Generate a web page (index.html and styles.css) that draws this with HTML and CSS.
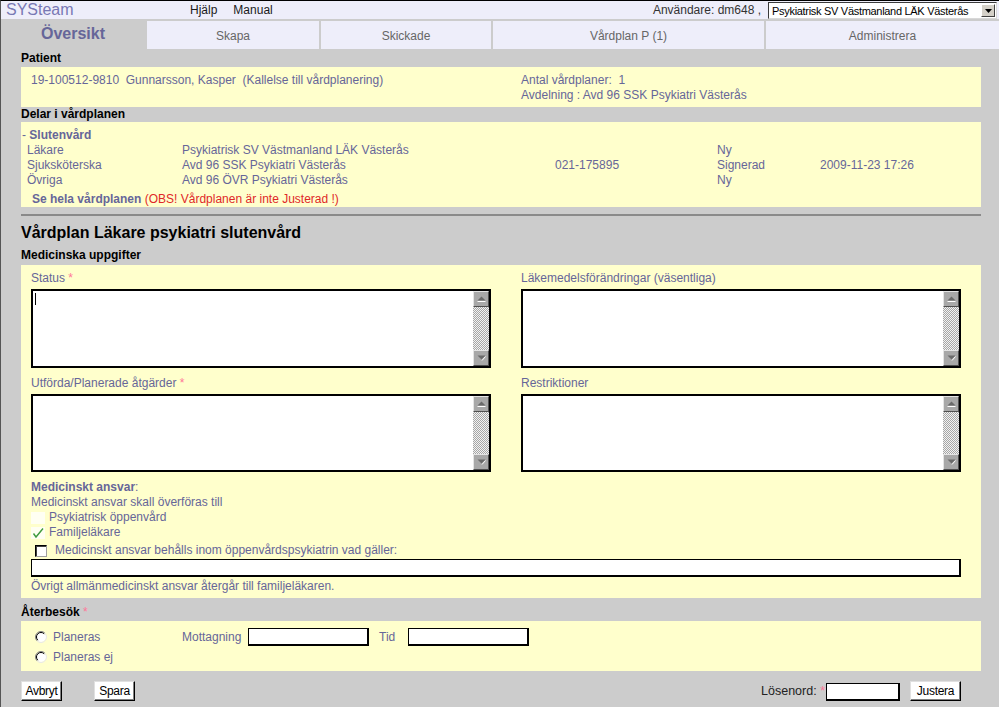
FILE: index.html
```html
<!DOCTYPE html>
<html lang="sv">
<head>
<meta charset="utf-8">
<title>SYSteam – Vårdplan</title>
<link rel="stylesheet" href="styles.css">
</head>
<body>
<div class="page">
  <header class="topbar">
    <div class="logo">SYSteam</div>
    <nav class="toplinks"><a href="#">Hjälp</a><a href="#">Manual</a></nav>
    <div class="user">
      <span class="user-label">Användare: dm648 ,</span>
      <div class="select">
        <span class="select-text">Psykiatrisk SV Västmanland LÄK Västerås</span>
        <span class="select-btn"><svg width="7" height="4" viewBox="0 0 7 4"><path d="M0 0H7L3.5 4Z" fill="#000"/></svg></span>
      </div>
    </div>
  </header>

  <nav class="tabs">
    <div class="tab active">Översikt</div>
    <div class="tab">Skapa</div>
    <div class="tab">Skickade</div>
    <div class="tab">Vårdplan P (1)</div>
    <div class="tab">Administrera</div>
  </nav>

  <main class="content">
    <h2 class="sec-head sh-patient">Patient</h2>
    <section class="panel patient">
      <div class="pcol">19-100512-9810&nbsp; Gunnarsson, Kasper&nbsp; (Kallelse till vårdplanering)</div>
      <div class="pcol">Antal vårdplaner:&nbsp; 1<br>Avdelning : Avd 96 SSK Psykiatri Västerås</div>
    </section>

    <h2 class="sec-head sh-delar">Delar i vårdplanen</h2>
    <section class="panel delar">
      <div class="grp">- <b>Slutenvård</b></div>
      <div class="drow"><span>Läkare</span><span>Psykiatrisk SV Västmanland LÄK Västerås</span><span></span><span>Ny</span><span></span></div>
      <div class="drow"><span>Sjuksköterska</span><span>Avd 96 SSK Psykiatri Västerås</span><span>021-175895</span><span>Signerad</span><span>2009-11-23 17:26</span></div>
      <div class="drow"><span>Övriga</span><span>Avd 96 ÖVR Psykiatri Västerås</span><span></span><span>Ny</span><span></span></div>
      <div class="see"><b>Se hela vårdplanen</b> <span class="warn">(OBS! Vårdplanen är inte Justerad !)</span></div>
    </section>

    <hr class="sep">
    <h1 class="title">Vårdplan Läkare psykiatri slutenvård</h1>

    <h2 class="sec-head sh-med">Medicinska uppgifter</h2>
    <section class="panel med">
      <div class="fields">
        <div class="field">
          <label class="flabel">Status <span class="req">*</span></label>
          <div class="ta ta-left ta-h1 focused">
            <textarea aria-label="Status"></textarea>
            <div class="sb">
              <div class="sb-btn"><svg width="9" height="6" viewBox="0 0 9 6"><path d="M4.5 0.5L8.5 4.5H0.5Z" fill="#6a6a6a"/><path d="M0.5 5.5H8.5" stroke="#fff" stroke-width="1"/></svg></div>
              <div class="sb-track"></div>
              <div class="sb-btn"><svg width="9" height="6" viewBox="0 0 9 6"><path d="M0.5 0.5H8.5L4.5 4.5Z" fill="#6a6a6a"/><path d="M5 5.5L8.5 1.5" stroke="#fff" stroke-width="1"/></svg></div>
            </div>
          </div>
        </div>
        <div class="field">
          <label class="flabel">Läkemedelsförändringar (väsentliga)</label>
          <div class="ta ta-right ta-h1">
            <textarea aria-label="Läkemedelsförändringar"></textarea>
            <div class="sb">
              <div class="sb-btn"><svg width="9" height="6" viewBox="0 0 9 6"><path d="M4.5 0.5L8.5 4.5H0.5Z" fill="#6a6a6a"/><path d="M0.5 5.5H8.5" stroke="#fff" stroke-width="1"/></svg></div>
              <div class="sb-track"></div>
              <div class="sb-btn"><svg width="9" height="6" viewBox="0 0 9 6"><path d="M0.5 0.5H8.5L4.5 4.5Z" fill="#6a6a6a"/><path d="M5 5.5L8.5 1.5" stroke="#fff" stroke-width="1"/></svg></div>
            </div>
          </div>
        </div>
        <div class="field">
          <label class="flabel">Utförda/Planerade åtgärder <span class="req">*</span></label>
          <div class="ta ta-left ta-h2">
            <textarea aria-label="Utförda/Planerade åtgärder"></textarea>
            <div class="sb">
              <div class="sb-btn"><svg width="9" height="6" viewBox="0 0 9 6"><path d="M4.5 0.5L8.5 4.5H0.5Z" fill="#6a6a6a"/><path d="M0.5 5.5H8.5" stroke="#fff" stroke-width="1"/></svg></div>
              <div class="sb-track"></div>
              <div class="sb-btn"><svg width="9" height="6" viewBox="0 0 9 6"><path d="M0.5 0.5H8.5L4.5 4.5Z" fill="#6a6a6a"/><path d="M5 5.5L8.5 1.5" stroke="#fff" stroke-width="1"/></svg></div>
            </div>
          </div>
        </div>
        <div class="field">
          <label class="flabel">Restriktioner</label>
          <div class="ta ta-right ta-h2">
            <textarea aria-label="Restriktioner"></textarea>
            <div class="sb">
              <div class="sb-btn"><svg width="9" height="6" viewBox="0 0 9 6"><path d="M4.5 0.5L8.5 4.5H0.5Z" fill="#6a6a6a"/><path d="M0.5 5.5H8.5" stroke="#fff" stroke-width="1"/></svg></div>
              <div class="sb-track"></div>
              <div class="sb-btn"><svg width="9" height="6" viewBox="0 0 9 6"><path d="M0.5 0.5H8.5L4.5 4.5Z" fill="#6a6a6a"/><path d="M5 5.5L8.5 1.5" stroke="#fff" stroke-width="1"/></svg></div>
            </div>
          </div>
        </div>
      </div>

      <div class="ansvar">
        <div class="line"><b>Medicinskt ansvar</b>:</div>
        <div class="line">Medicinskt ansvar skall överföras till</div>
        <div class="line opt"><span class="optimg"></span>Psykiatrisk öppenvård</div>
        <div class="line opt"><span class="optimg"><svg width="14" height="12" viewBox="0 0 14 12"><path d="M2.5 6.5L5 10L12 1.5" fill="none" stroke="#3e9a3e" stroke-width="1.4"/></svg></span>Familjeläkare</div>
        <label class="chkrow"><span class="chk"></span>Medicinskt ansvar behålls inom öppenvårdspsykiatrin vad gäller:</label>
        <div class="wideinput"></div>
        <div class="line">Övrigt allmänmedicinskt ansvar återgår till familjeläkaren.</div>
      </div>
    </section>

    <h2 class="sec-head sh-ater">Återbesök <span class="req">*</span></h2>
    <section class="panel ater">
      <div class="arow">
        <span class="radio"><svg width="12" height="12" viewBox="0 0 12 12"><circle cx="6" cy="6" r="5" fill="#fff"/><path d="M9.9 2.1A5.5 5.5 0 0 0 2.1 9.9" fill="none" stroke="#808080" stroke-width="1"/><path d="M9.2 2.8A4.5 4.5 0 0 0 2.8 9.2" fill="none" stroke="#000" stroke-width="1"/><path d="M2.1 9.9A5.5 5.5 0 0 0 9.9 2.1" fill="none" stroke="#e8e8e8" stroke-width="1"/></svg></span>
        <span class="rlabel">Planeras</span>
        <span class="mlabel">Mottagning</span><span class="sinput"></span>
        <span class="tlabel">Tid</span><span class="sinput"></span>
      </div>
      <div class="arow">
        <span class="radio"><svg width="12" height="12" viewBox="0 0 12 12"><circle cx="6" cy="6" r="5" fill="#fff"/><path d="M9.9 2.1A5.5 5.5 0 0 0 2.1 9.9" fill="none" stroke="#808080" stroke-width="1"/><path d="M9.2 2.8A4.5 4.5 0 0 0 2.8 9.2" fill="none" stroke="#000" stroke-width="1"/><path d="M2.1 9.9A5.5 5.5 0 0 0 9.9 2.1" fill="none" stroke="#e8e8e8" stroke-width="1"/></svg></span>
        <span class="rlabel">Planeras ej</span>
      </div>
    </section>

    <div class="actions">
      <button class="btn btn-avbryt" type="button">Avbryt</button>
      <button class="btn btn-spara" type="button">Spara</button>
      <div class="sign">
        <span class="pwlabel">Lösenord: <span class="req">*</span></span>
        <span class="pwinput"></span>
        <button class="btn btn-justera" type="button">Justera</button>
      </div>
    </div>
  </main>
</div>
</body>
</html>
```

FILE: styles.css
```css
* { box-sizing: border-box; }

html, body {
  margin: 0;
  padding: 0;
}

body {
  background: #cccccc;
  font-family: "Liberation Sans", Arial, sans-serif;
  font-size: 12px;
  color: #666699;
  width: 999px;
  height: 707px;
  overflow: hidden;
}

.page {
  height: 707px;
  border-top: 1px solid #000;
  border-left: 1px solid #555;
}

/* ---------- top bar ---------- */
.topbar {
  height: 18px;
  background: #eeeefa;
  display: flex;
  align-items: center;
}

.logo {
  width: 189px;
  padding-left: 5px;
  font-size: 16px;
  color: #7878b4;
  line-height: 18px;
}

.toplinks {
  display: flex;
  gap: 16px;
}

.toplinks a {
  color: #1a1a1a;
  text-decoration: none;
  font-size: 12px;
}

.user {
  margin-left: auto;
  display: flex;
  align-items: center;
}

.user-label {
  color: #333;
  margin-right: 7px;
}

.select {
  width: 229px;
  height: 17px;
  margin-right: 2px;
  margin-top: 1px;
  background: #fff;
  border: 1px solid;
  border-color: #3a3a3a #d8d8d8 #d8d8d8 #3a3a3a;
  display: flex;
  align-items: center;
}

.select-text {
  flex: 1;
  padding-left: 3px;
  font-size: 11px;
  letter-spacing: -0.3px;
  color: #000;
  white-space: nowrap;
  overflow: hidden;
}

.select-btn {
  width: 14px;
  height: 13px;
  margin-right: 1px;
  background: #d4d0c8;
  border: 1px solid;
  border-color: #fff #404040 #404040 #fff;
  display: flex;
  align-items: center;
  justify-content: center;
}

/* ---------- tabs ---------- */
.tabs {
  display: grid;
  grid-template-columns: 144px 172px 170px 271px 1fr;
  column-gap: 2px;
  padding-top: 2px;
  height: 30px;
}

.tab {
  background: #eeeefa;
  color: #666;
  display: flex;
  align-items: center;
  justify-content: center;
  font-size: 12px;
  padding-top: 2px;
}

.tab.active {
  background: transparent;
  color: #666699;
  font-size: 16px;
  font-weight: bold;
  padding-top: 0;
  padding-bottom: 2px;
}

/* ---------- content ---------- */
.content {
  padding-left: 20px;
  width: 980px;
}

.sec-head {
  margin: 0;
  font-size: 12px;
  font-weight: bold;
  color: #000;
}

.sh-patient { height: 18px; line-height: 17px; padding-top: 1px; }
.sh-delar { height: 15px; line-height: 15px; }
.sh-med { height: 17px; line-height: 15px; margin-top: 5px; }
.sh-ater { height: 23px; line-height: 15px; padding-top: 7px; }

.req {
  color: #ff7799;
  font-weight: normal;
}

.panel {
  background: #ffffcc;
  width: 960px;
  line-height: 15px;
}

/* patient */
.patient {
  height: 40px;
  padding: 6px 0 0 10px;
  display: grid;
  grid-template-columns: 490px 1fr;
}

/* delar */
.delar {
  height: 85px;
  padding: 6px 0 0 1px;
}

.drow {
  display: grid;
  grid-template-columns: 155px 373px 162px 103px 1fr;
  padding-left: 5px;
}

.see {
  margin-top: 4px;
  padding-left: 10px;
}

.warn {
  color: #e02828;
}

.sep {
  margin: 7px 0 0 0;
  height: 2px;
  width: 960px;
  border: 0;
  background: #8a8a8a;
}

.title {
  margin: 7px 0 0 0;
  font-size: 16px;
  line-height: 20px;
  font-weight: bold;
  color: #000;
}

/* medicinska */
.med {
  height: 333px;
  padding: 6px 0 0 10px;
}

.fields {
  display: grid;
  grid-template-columns: 490px 460px;
  row-gap: 8px;
}

.flabel {
  display: block;
  line-height: 15px;
  margin-bottom: 3px;
}

.ta {
  position: relative;
  display: flex;
  background: #fff;
  border: 2px solid #000;
}

.ta-left { width: 460px; }
.ta-right { width: 440px; }
.ta-h1 { height: 79px; }
.ta-h2 { height: 78px; }

.ta textarea {
  flex: 1;
  border: 0;
  resize: none;
  outline: none;
  background: #fff;
  font: inherit;
  padding: 2px;
}

.ta.focused::before {
  content: "";
  position: absolute;
  left: 2px;
  top: 2px;
  width: 1px;
  height: 12px;
  background: #000;
}

.sb {
  width: 16px;
  display: flex;
  flex-direction: column;
}

.sb-btn {
  width: 16px;
  height: 16px;
  background: #a8a8a8;
  border: 1px solid;
  border-color: #e4e4e4 #505050 #505050 #e4e4e4;
  display: flex;
  align-items: center;
  justify-content: center;
}

.sb-track {
  flex: 1;
  background: repeating-conic-gradient(#a6a6a6 0 25%, #f2f2f2 0 50%) 0 0 / 2px 2px;
}

.ansvar {
  margin-top: 8px;
}

.line {
  line-height: 15px;
}

.opt {
  display: flex;
  align-items: center;
}

.optimg {
  width: 14px;
  height: 12px;
  margin-right: 4px;
  background: #fffff2;
  display: inline-flex;
}

.chkrow {
  display: flex;
  align-items: center;
  height: 17px;
  margin-top: 2px;
  padding-left: 4px;
}

.chk {
  width: 12px;
  height: 12px;
  margin-right: 8px;
  background: #fff;
  border: 1px solid;
  border-color: #000 #a0a0a0 #a0a0a0 #000;
  box-shadow: inset 1px 1px 0 #404040;
}

.wideinput {
  width: 930px;
  height: 18px;
  background: #fff;
  border: 1px solid #000;
  border-bottom-width: 2px;
  border-right-width: 2px;
  margin-bottom: 2px;
}

/* återbesök */
.ater {
  height: 50px;
  padding: 6px 0 0 14px;
}

.arow {
  display: flex;
  align-items: center;
  height: 20px;
}

.radio {
  width: 12px;
  height: 12px;
  display: inline-flex;
  margin-right: 6px;
}

.rlabel {
  width: 129px;
}

.mlabel {
  width: 66px;
}

.tlabel {
  width: 39px;
  padding-left: 10px;
}

.sinput {
  width: 121px;
  height: 18px;
  background: #fff;
  border: 1px solid #000;
  border-bottom-width: 2px;
  border-right-width: 2px;
}

/* actions */
.actions {
  width: 940px;
  margin-top: 10px;
  display: flex;
  align-items: center;
}

.btn {
  height: 20px;
  padding: 0;
  font: inherit;
  font-size: 12px;
  color: #000;
  background: #fff;
  border: 1px solid;
  border-color: #e0e0e0 #000 #000 #e0e0e0;
  box-shadow: inset -1px -1px 0 #808080;
  letter-spacing: -0.3px;
}

.btn-avbryt { width: 41px; }
.btn-spara { width: 41px; margin-left: 32px; }
.btn-justera { width: 51px; margin-left: 10px; }

.sign {
  margin-left: auto;
  display: flex;
  align-items: center;
}

.pwlabel {
  color: #222;
  margin-right: 1px;
  font-size: 12.5px;
}

.pwinput {
  width: 74px;
  height: 18px;
  margin-top: 2px;
  background: #fff;
  border: 1px solid #000;
  border-bottom-width: 2px;
  border-right-width: 2px;
}
```
